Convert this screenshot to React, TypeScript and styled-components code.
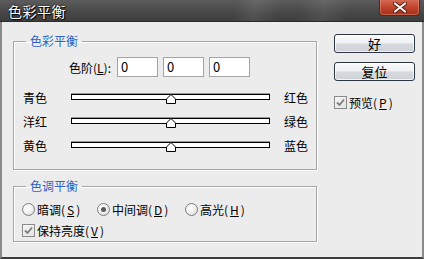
import React from "react";
import styled, { createGlobalStyle } from "styled-components";

const Global = createGlobalStyle`
  html, body { margin: 0; padding: 0; }
  body {
    font-family: "Noto Sans CJK SC", "Liberation Sans", sans-serif;
    font-size: 12px;
    color: #000;
    background: #ececec;
  }
  * { box-sizing: border-box; }
`;

const Window = styled.div`
  width: 424px;
  height: 259px;
  display: flex;
  flex-direction: column;
  overflow: hidden;
`;

const TitleBar = styled.div`
  height: 22px;
  flex: none;
  display: flex;
  justify-content: space-between;
  align-items: flex-start;
  padding: 0 4px 0 8px;
  background:
    linear-gradient(105deg, transparent 55%, rgba(255,255,255,0.08) 60%, transparent 66%),
    linear-gradient(100deg, transparent 70%, rgba(255,255,255,0.07) 76%, transparent 82%),
    linear-gradient(180deg, #5c5c5c 0%, #474747 60%, #3e3e3e 100%);
  border-bottom: 1px solid #2a2a2a;
`;

const Title = styled.span`
  color: #fff;
  font-size: 14px;
  line-height: 22px;
  letter-spacing: 0.5px;
  text-shadow: 0 0 2px #000, 1px 1px 1px #000;
`;

const CloseButton = styled.div`
  width: 41px;
  height: 17px;
  margin-top: -1px;
  border: 1px solid #5a2418;
  border-top: none;
  border-radius: 0 0 4px 4px;
  background: linear-gradient(180deg, #d9705c 0%, #c0462e 50%, #a83018 100%);
  display: flex;
  align-items: center;
  justify-content: center;
  box-shadow: inset 0 0 0 1px rgba(255, 190, 170, 0.35);
`;

const Body = styled.div`
  flex: 1;
  display: flex;
  gap: 17px;
  padding: 12px 7px 0 11px;
  background: #ececec;
  border-left: 2px solid #8a8a8a;
  border-right: 2px solid #8a8a8a;
  border-bottom: 2px solid #3c3c3c;
`;

const LeftCol = styled.div`
  width: 304px;
  display: flex;
  flex-direction: column;
  gap: 9px;
`;

const Group = styled.fieldset<{ $pt: number; $pb: number }>`
  margin: 0;
  min-width: 0;
  padding: ${(p) => p.$pt}px 0 ${(p) => p.$pb}px 0;
  border: 1px solid #a6a6a6;
  box-shadow: 1px 1px 0 #fff, inset 1px 1px 0 #fff;
  display: flex;
  flex-direction: column;
`;

const Legend = styled.legend`
  margin-left: 12px;
  padding: 0 4px;
  font-size: 12px;
  line-height: 14px;
  color: #2f62c4;
`;

const LevelRow = styled.div`
  display: flex;
  align-items: center;
  height: 20px;
  padding-left: 55px;
  margin-bottom: 8px;
`;

const LevelLabel = styled.span`
  width: 48px;
  flex: none;
  white-space: nowrap;
`;

const NumField = styled.div`
  width: 41px;
  height: 20px;
  margin-right: 5px;
  border: 1px solid #a4a4a4;
  background: #fff;
  font-size: 13px;
  line-height: 18px;
  padding-left: 3px;
`;

const SliderRow = styled.div`
  display: flex;
  align-items: center;
  height: 24px;
  padding-left: 9px;
`;

const SideLabel = styled.span<{ $w: number }>`
  width: ${(p) => p.$w}px;
  flex: none;
  white-space: nowrap;
`;

const Track = styled.div`
  position: relative;
  width: 199px;
  height: 6px;
  margin-right: 14px;
  border: 1px solid #000;
  background: #fff;
  box-shadow: 0 -1px 0 #9a9a9a;
`;

const Thumb = styled.svg`
  position: absolute;
  left: 94px;
  top: -1px;
`;

const RadioRow = styled.div`
  display: grid;
  grid-template-columns: 75px 88px auto;
  height: 20px;
  align-items: center;
  padding-left: 8px;
  margin-bottom: 1px;
`;

const Option = styled.label`
  display: flex;
  align-items: center;
  gap: 2px;
  white-space: nowrap;
`;

const RadioDot = styled.span<{ $on?: boolean }>`
  width: 13px;
  height: 13px;
  border-radius: 50%;
  border: 1px solid #7c7c7c;
  background: radial-gradient(circle at 40% 35%, #ffffff 0%, #f2f2f2 45%, #d4d4d4 100%);
  display: flex;
  align-items: center;
  justify-content: center;
  &::after {
    content: "";
    display: ${(p) => (p.$on ? "block" : "none")};
    width: 5px;
    height: 5px;
    border-radius: 50%;
    background: #5a5a5a;
  }
`;

const CheckRow = styled.div<{ $pl: number; $mt?: number }>`
  display: flex;
  align-items: center;
  height: 20px;
  padding-left: ${(p) => p.$pl}px;
  margin-top: ${(p) => p.$mt ?? 0}px;
`;

const CheckBox = styled.span`
  width: 13px;
  height: 13px;
  border: 1px solid #8a8a8a;
  background: linear-gradient(135deg, #f6f6f6 0%, #e4e4e4 100%);
  display: flex;
  align-items: center;
  justify-content: center;
  flex: none;
`;

const RightCol = styled.div`
  width: 81px;
  display: flex;
  flex-direction: column;
`;

const Button = styled.div<{ $mt: number }>`
  height: 19px;
  margin-top: ${(p) => p.$mt}px;
  border: 1px solid #2c3644;
  border-radius: 3px;
  background: linear-gradient(180deg, #fbfbfb 0%, #eef0f2 45%, #d6dade 55%, #cfd3d8 100%);
  box-shadow: inset 0 0 0 1px rgba(255,255,255,0.7);
  display: flex;
  align-items: center;
  justify-content: center;
  font-size: 13px;
`;

const U = styled.u`
  text-underline-offset: 1px;
`;

const Check = () => (
  <CheckBox>
    <svg width="9" height="9" viewBox="0 0 9 9">
      <path d="M1 4.5 L3.5 7 L8 1.5" fill="none" stroke="#7a7a7a" strokeWidth="1.8" />
    </svg>
  </CheckBox>
);

const Slider = ({ left, right }: { left: string; right: string }) => (
  <SliderRow>
    <SideLabel $w={48}>{left}</SideLabel>
    <Track>
      <Thumb width="10" height="10" viewBox="0 0 10 10">
        <path d="M0.5 9.5 L0.5 5 L5 0.5 L9.5 5 L9.5 9.5 Z" fill="#fff" stroke="#000" strokeWidth="1" />
      </Thumb>
    </Track>
    <SideLabel $w={30}>{right}</SideLabel>
  </SliderRow>
);

export default function App() {
  return (
    <Window>
      <Global />
      <TitleBar>
        <Title>色彩平衡</Title>
        <CloseButton>
          <svg width="14" height="11" viewBox="0 0 14 11">
            <path d="M2 1.5 L12 9.5 M12 1.5 L2 9.5" stroke="#5a1a10" strokeWidth="4" strokeLinecap="round" />
            <path d="M2 1.5 L12 9.5 M12 1.5 L2 9.5" stroke="#f4f4f4" strokeWidth="2.2" strokeLinecap="round" />
          </svg>
        </CloseButton>
      </TitleBar>
      <Body>
        <LeftCol>
          <Group $pt={9} $pb={12}>
            <Legend>色彩平衡</Legend>
            <LevelRow>
              <LevelLabel>
                色阶(<U>L</U>):
              </LevelLabel>
              <NumField>0</NumField>
              <NumField>0</NumField>
              <NumField>0</NumField>
            </LevelRow>
            <Slider left="青色" right="红色" />
            <Slider left="洋红" right="绿色" />
            <Slider left="黄色" right="蓝色" />
          </Group>
          <Group $pt={6} $pb={1}>
            <Legend>色调平衡</Legend>
            <RadioRow>
              <Option>
                <RadioDot />
                暗调(<U>S</U>)
              </Option>
              <Option>
                <RadioDot $on />
                中间调(<U>D</U>)
              </Option>
              <Option>
                <RadioDot />
                高光(<U>H</U>)
              </Option>
            </RadioRow>
            <CheckRow $pl={8}>
              <Option>
                <Check />
                保持亮度(<U>V</U>)
              </Option>
            </CheckRow>
          </Group>
        </LeftCol>
        <RightCol>
          <Button $mt={0}>好</Button>
          <Button $mt={9}>复位</Button>
          <CheckRow $pl={0} $mt={11}>
            <Option>
              <Check />
              预览(<U>P</U>)
            </Option>
          </CheckRow>
        </RightCol>
      </Body>
    </Window>
  );
}
